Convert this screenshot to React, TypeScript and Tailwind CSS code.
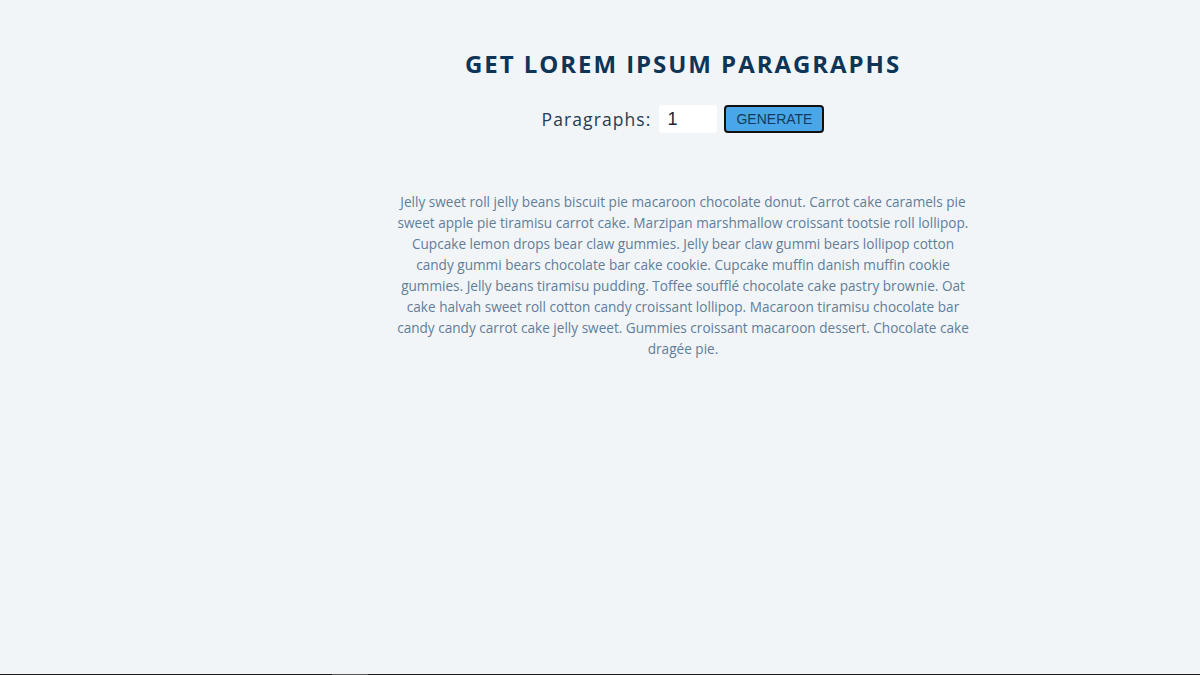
import React, { useState } from 'react';

const lines = [
  'Jelly sweet roll jelly beans biscuit pie macaroon chocolate donut. Carrot cake caramels pie',
  'sweet apple pie tiramisu carrot cake. Marzipan marshmallow croissant tootsie roll lollipop.',
  'Cupcake lemon drops bear claw gummies. Jelly bear claw gummi bears lollipop cotton',
  'candy gummi bears chocolate bar cake cookie. Cupcake muffin danish muffin cookie',
  'gummies. Jelly beans tiramisu pudding. Toffee soufflé chocolate cake pastry brownie. Oat',
  'cake halvah sweet roll cotton candy croissant lollipop. Macaroon tiramisu chocolate bar',
  'candy candy carrot cake jelly sweet. Gummies croissant macaroon dessert. Chocolate cake',
  'dragée pie.',
];

export default function App() {
  const [count, setCount] = useState(1);

  return (
    <div className="min-h-[675px] h-[675px] bg-[#f1f5f8] flex flex-col font-['Open_Sans',sans-serif]">
      <main className="flex-1 pl-[166px] pt-[46px]">
        <section className="flex flex-col items-center">
          <h3 className="text-[24px] leading-[36px] font-bold uppercase tracking-[1.95px] text-[#0e3456]">
            Get lorem ipsum paragraphs
          </h3>
          <form className="flex items-center mt-[23px]" onSubmit={(e) => e.preventDefault()}>
            <label htmlFor="amount" className="text-[17.5px] tracking-[1.1px] text-[#243b53] mr-[8px]">
              Paragraphs:
            </label>
            <input
              id="amount"
              type="number"
              value={count}
              onChange={(e) => setCount(Number(e.target.value))}
              className="w-[58px] h-[28px] bg-white rounded-[4px] px-[8px] text-[18px] text-[#102a42] outline-none font-['Liberation_Sans',sans-serif] [appearance:textfield]"
            />
            <button
              type="submit"
              className="ml-[7px] w-[100px] h-[28px] bg-[#49a6e9] border-2 border-[#111] rounded-[4px] text-[14px] uppercase text-[#163a5a] font-['Liberation_Sans',sans-serif]"
            >
              Generate
            </button>
          </form>
          <article className="mt-[58px] text-center text-[13.6px] leading-[21px] text-[#617d98]">
            {lines.map((l, i) => (
              <p key={i} className="whitespace-nowrap">{l}</p>
            ))}
          </article>
        </section>
      </main>
      <div className="h-px bg-[#1d1d1d] flex">
        <div className="ml-[332px] w-[36px] bg-[#555]" />
      </div>
    </div>
  );
}
